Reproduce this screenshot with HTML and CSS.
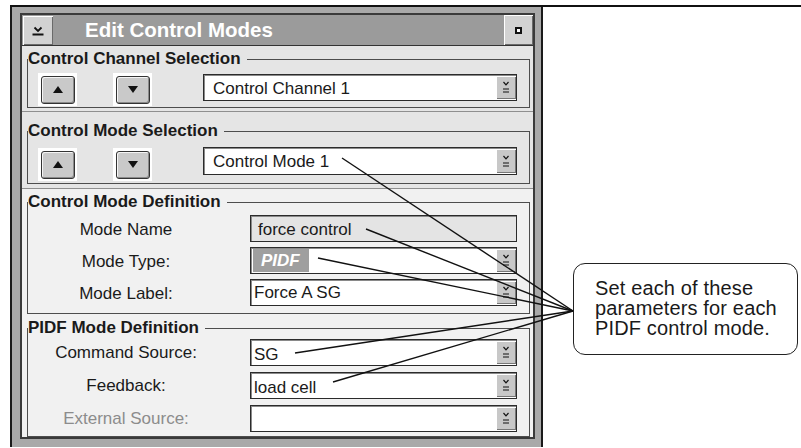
FILE: index.html
```html
<!DOCTYPE html>
<html lang="en">
<head>
    <meta charset="UTF-8">
    <title>Edit Control Modes</title>
    <link rel="stylesheet" href="styles.css">
</head>
<body>

<div class="page">
    <div class="window">
        <div class="client">

            <div class="titlebar">
                <button class="tb-btn menu-btn">
                    <svg width="12" height="10" viewBox="0 0 12 10"><polyline points="2.5,1.5 6,5 9.5,1.5" fill="none" stroke="#111" stroke-width="1.8"/><line x1="0.5" y1="8.5" x2="11.5" y2="8.5" stroke="#111" stroke-width="2"/></svg>
                </button>
                <span class="title">Edit Control Modes</span>
                <button class="tb-btn min-btn"><span class="min-icon"></span></button>
            </div>

            <div class="panel panel-channel">
                <fieldset class="group group-select">
                    <legend>Control Channel Selection</legend>
                    <div class="select-row">
                        <span class="spin"><button class="spin-btn"><span class="tri-up"></span></button></span>
                        <span class="spin"><button class="spin-btn"><span class="tri-down"></span></button></span>
                        <div class="combo combo-sel">
                            <span class="combo-text">Control Channel 1</span>
                            <span class="drop"><svg width="8" height="13" viewBox="0 0 8 13"><polyline points="1.5,1 4,3.8 6.5,1" fill="none" stroke="#111" stroke-width="1.2"/><line x1="1" y1="8" x2="7" y2="8" stroke="#111"/><line x1="1" y1="11" x2="7" y2="11" stroke="#111"/></svg></span>
                        </div>
                    </div>
                </fieldset>
            </div>

            <div class="panel panel-mode">
                <fieldset class="group group-select">
                    <legend>Control Mode Selection</legend>
                    <div class="select-row row-mode">
                        <span class="spin"><button class="spin-btn"><span class="tri-up"></span></button></span>
                        <span class="spin"><button class="spin-btn"><span class="tri-down"></span></button></span>
                        <div class="combo combo-sel">
                            <span class="combo-text">Control Mode 1</span>
                            <span class="drop"><svg width="8" height="13" viewBox="0 0 8 13"><polyline points="1.5,1 4,3.8 6.5,1" fill="none" stroke="#111" stroke-width="1.2"/><line x1="1" y1="8" x2="7" y2="8" stroke="#111"/><line x1="1" y1="11" x2="7" y2="11" stroke="#111"/></svg></span>
                        </div>
                    </div>
                </fieldset>
            </div>

            <div class="panel panel-def">
                <fieldset class="group group-def">
                    <legend>Control Mode Definition</legend>
                    <div class="form-grid">
                        <span class="field-label">Mode Name</span>
                        <div class="combo readonly"><span class="combo-text">force control</span></div>

                        <span class="field-label">Mode Type:</span>
                        <div class="combo">
                            <span class="combo-text"><span class="badge">PIDF</span></span>
                            <span class="drop"><svg width="8" height="13" viewBox="0 0 8 13"><polyline points="1.5,1 4,3.8 6.5,1" fill="none" stroke="#111" stroke-width="1.2"/><line x1="1" y1="8" x2="7" y2="8" stroke="#111"/><line x1="1" y1="11" x2="7" y2="11" stroke="#111"/></svg></span>
                        </div>

                        <span class="field-label">Mode Label:</span>
                        <div class="combo">
                            <span class="combo-text">Force A SG</span>
                            <span class="drop"><svg width="8" height="13" viewBox="0 0 8 13"><polyline points="1.5,1 4,3.8 6.5,1" fill="none" stroke="#111" stroke-width="1.2"/><line x1="1" y1="8" x2="7" y2="8" stroke="#111"/><line x1="1" y1="11" x2="7" y2="11" stroke="#111"/></svg></span>
                        </div>
                    </div>
                </fieldset>

                <fieldset class="group group-pidf">
                    <legend>PIDF Mode Definition</legend>
                    <div class="form-grid">
                        <span class="field-label">Command Source:</span>
                        <div class="combo">
                            <span class="combo-text low">SG</span>
                            <span class="drop"><svg width="8" height="13" viewBox="0 0 8 13"><polyline points="1.5,1 4,3.8 6.5,1" fill="none" stroke="#111" stroke-width="1.2"/><line x1="1" y1="8" x2="7" y2="8" stroke="#111"/><line x1="1" y1="11" x2="7" y2="11" stroke="#111"/></svg></span>
                        </div>

                        <span class="field-label">Feedback:</span>
                        <div class="combo">
                            <span class="combo-text low">load cell</span>
                            <span class="drop"><svg width="8" height="13" viewBox="0 0 8 13"><polyline points="1.5,1 4,3.8 6.5,1" fill="none" stroke="#111" stroke-width="1.2"/><line x1="1" y1="8" x2="7" y2="8" stroke="#111"/><line x1="1" y1="11" x2="7" y2="11" stroke="#111"/></svg></span>
                        </div>

                        <span class="field-label disabled">External Source:</span>
                        <div class="combo">
                            <span class="combo-text"></span>
                            <span class="drop"><svg width="8" height="13" viewBox="0 0 8 13"><polyline points="1.5,1 4,3.8 6.5,1" fill="none" stroke="#111" stroke-width="1.2"/><line x1="1" y1="8" x2="7" y2="8" stroke="#111"/><line x1="1" y1="11" x2="7" y2="11" stroke="#111"/></svg></span>
                        </div>
                    </div>
                </fieldset>
            </div>

        </div>
    </div>

    <div class="callout">
        <span class="note-line">Set each of these</span>
        <span class="note-line">parameters for each</span>
        <span class="note-line">PIDF control mode.</span>
    </div>
</div>

<!-- leader lines from the fields to the note -->
<svg class="leaders" width="801" height="448" viewBox="0 0 801 448">
    <line x1="342" y1="158" x2="573" y2="311"/>
    <line x1="366" y1="229" x2="573" y2="311"/>
    <line x1="318" y1="258" x2="573" y2="311"/>
    <line x1="295" y1="353" x2="573" y2="311"/>
    <line x1="333" y1="382" x2="573" y2="311"/>
</svg>

</body>
</html>
```

FILE: styles.css
```css
body {
    margin: 0;
    height: 448px;
    overflow: hidden;
    position: relative;
    background: #fff;
    color: #1a1a1a;
    font-family: "Liberation Sans", Arial, sans-serif;
}

.page {
    display: flex;
    align-items: flex-start;
    margin: 5px 0 0 10px;
    border-top: 2px solid #111;
}

.window {
    background: #a9a9a9;
    border-left: 2px solid #1a1a1a;
    border-right: 2px solid #1a1a1a;
    padding: 6px 6px 8px 8px;
}

.client {
    width: 511px;
    border: 2px solid #3a3a3a;
}

/* title bar */
.titlebar {
    display: flex;
    align-items: flex-start;
    height: 30px;
    background: #9b9b9b;
    border-bottom: 1px solid #333;
}

.tb-btn {
    display: flex;
    align-items: center;
    justify-content: center;
    padding: 0;
    border: none;
    background: #d2d2d2;
    box-shadow: inset 1px 1px 0 #fff, inset -1px -1px 0 #6a6a6a;
}

.menu-btn {
    width: 30px;
    height: 29px;
    margin: 1px 0 0 1px;
}

.min-btn {
    width: 29px;
    height: 30px;
    margin-left: auto;
}

.min-icon {
    width: 3px;
    height: 3px;
    border: 2px solid #111;
    background: #fff;
}

.title {
    margin-left: 32px;
    color: #fff;
    font-weight: bold;
    font-size: 20.5px;
    line-height: 30px;
}

/* panels */
.panel {
    background: #e5e5e5;
    padding: 3px 3px 3px 5px;
    border-bottom: 1px solid #8f8f8f;
}

.panel-mode {
    padding-top: 9px;
    padding-bottom: 4px;
}

.panel-def {
    background: #f1f1f1;
    padding: 3px 3px 0 5px;
    border-bottom: none;
}

.group {
    margin: 0;
    min-width: 0;
    border: 1px solid #4d4d4d;
}

.group legend {
    padding: 0 6px 0 0;
    font-weight: bold;
    font-size: 17px;
    line-height: 20px;
}

.group-select {
    padding: 4px 12px 1px 10px;
}

.group-select legend {
    margin-left: -10px;
}

.panel-mode .group-select {
    padding-top: 6px;
    padding-bottom: 2px;
}

.select-row {
    display: flex;
    align-items: flex-start;
}

.spin {
    display: flex;
    align-items: center;
    justify-content: center;
    width: 39px;
    height: 33px;
    background: #fff;
}

.spin + .spin {
    margin-left: 36px;
}

.row-mode .spin {
    margin-top: 1px;
}

.spin-btn {
    display: flex;
    align-items: center;
    justify-content: center;
    width: 34px;
    height: 28px;
    padding: 0;
    border: 1px solid #333;
    border-radius: 3px;
    background: #c9c9c9;
    box-shadow: inset 1px 1px 0 #f4f4f4, inset -1px -1px 0 #8a8a8a;
}

.tri-up {
    width: 0;
    height: 0;
    border-left: 5px solid transparent;
    border-right: 5px solid transparent;
    border-bottom: 7px solid #111;
}

.tri-down {
    width: 0;
    height: 0;
    border-left: 5px solid transparent;
    border-right: 5px solid transparent;
    border-top: 7px solid #111;
}

/* combo boxes */
.combo {
    display: flex;
    align-items: center;
    box-sizing: border-box;
    height: 27px;
    background: #fff;
    border: 1px solid #2b2b2b;
    box-shadow: inset 1px 1px 0 #8a8a8a;
}

.select-row .combo {
    flex: 1;
    margin: 1px 0 0 51px;
}

.row-mode .combo {
    margin-top: 0;
    height: 28px;
}

.combo-text {
    flex: 1;
    padding-left: 3px;
    font-size: 17px;
    line-height: 20px;
    white-space: nowrap;
}

.combo-sel .combo-text {
    padding-left: 9px;
    padding-top: 2px;
}

.combo-text.low {
    padding-top: 4px;
}

.readonly {
    background: #e4e4e4;
}

.readonly .combo-text {
    padding-left: 7px;
    padding-top: 2px;
}

.badge {
    display: inline-block;
    padding: 0 9px 0 8px;
    margin-left: -1px;
    background: #9f9f9f;
    color: #fff;
    font-weight: bold;
    font-style: italic;
    line-height: 23px;
}

.drop {
    display: flex;
    align-items: center;
    justify-content: center;
    align-self: stretch;
    width: 20px;
    margin: 1px 0;
    background: #c8c8c8;
    box-shadow: inset 1px 1px 0 #fff, inset -1px -1px 0 #777;
}

/* definition grids */
.group-def {
    padding: 3px 12px 7px 0;
}

.group-pidf {
    margin-top: 4px;
    padding: 1px 12px 4px 0;
}

.form-grid {
    display: grid;
    grid-template-columns: 196px 1fr;
    grid-auto-rows: 27px;
    column-gap: 26px;
    row-gap: 5px;
    align-items: center;
}

.group-pidf .form-grid {
    row-gap: 6px;
}

.field-label {
    text-align: center;
    font-size: 17px;
    line-height: 20px;
}

.group-def .field-label {
    padding-top: 3px;
}

.field-label.disabled {
    color: #8c8c8c;
}

/* note */
.callout {
    box-sizing: border-box;
    display: flex;
    flex-direction: column;
    width: 225px;
    height: 92px;
    margin: 256px 0 0 30px;
    padding: 14px 0 0 21px;
    border: 1px solid #222;
    border-radius: 12px;
    background: #fff;
    font-size: 20px;
    line-height: 20px;
    letter-spacing: 0.15px;
}

.note-line {
    height: 20px;
    white-space: nowrap;
}

.leaders {
    position: absolute;
    top: 0;
    left: 0;
    pointer-events: none;
}

.leaders line {
    stroke: #111;
    stroke-width: 1.4;
}
```
